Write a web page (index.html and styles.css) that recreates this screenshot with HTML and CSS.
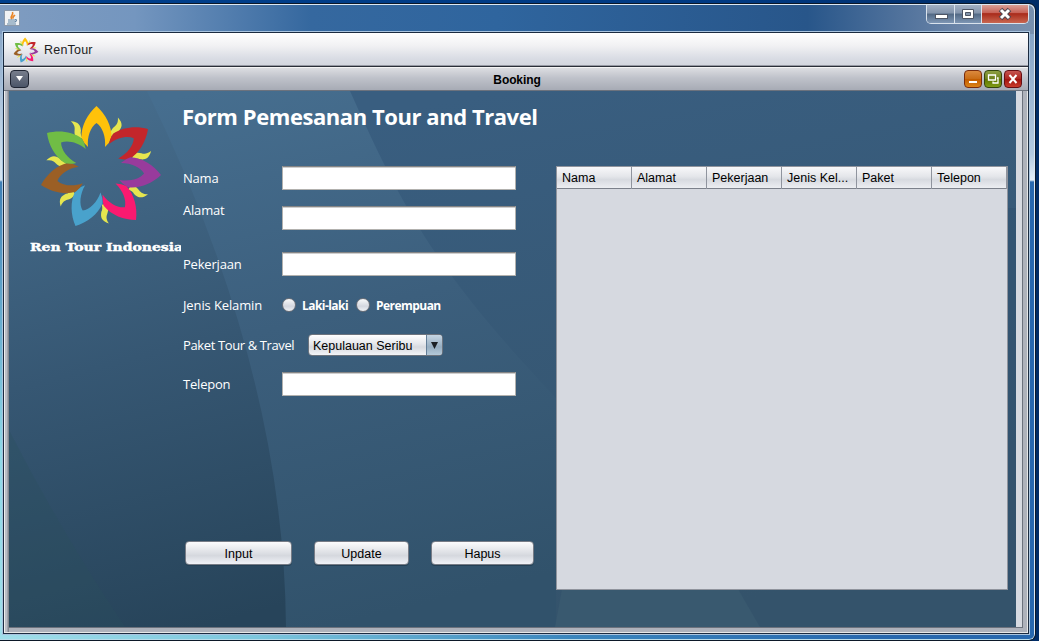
FILE: index.html
```html
<!DOCTYPE html>
<html lang="id">
<head>
<meta charset="utf-8">
<title>RenTour</title>
<link rel="stylesheet" href="styles.css">
</head>
<body>
<svg class="defs" width="0" height="0">
  <defs>
    <path id="petal" d="M0 0C-9 8-15.500 20-15 32Q-13 37-8.500 41C-9.500 31-6 21 0 17C6 21 9.500 31 8.500 41Q13 37 15 32C15.500 20 9 8 0 0Z"/>
    <path id="leaf" d="M-3 0C-5-10 3-9-1-19C6-15 6-11 4-6Q2-4 2 1Z"/>
    <g id="flower">
      <g fill="#e6e64f">
        <use href="#leaf" transform="translate(113 136) rotate(18)"/>
        <use href="#leaf" transform="translate(133 157) rotate(75)"/>
        <use href="#leaf" transform="translate(130 188) rotate(112)"/>
        <use href="#leaf" transform="translate(104 205) rotate(168)"/>
        <use href="#leaf" transform="translate(73 192) rotate(223)"/>
        <use href="#leaf" transform="translate(65 164) rotate(284)"/>
        <use href="#leaf" transform="translate(80 138) rotate(334)"/>
      </g>
      <use href="#petal" fill="#ffc20a" transform="translate(96.500 106)"/>
      <use href="#petal" fill="#c3262b" transform="translate(148 129) rotate(57)"/>
      <use href="#petal" fill="#983b9c" transform="translate(161 175) rotate(95)"/>
      <use href="#petal" fill="#fa1a70" transform="translate(136 220) rotate(139)"/>
      <use href="#petal" fill="#49a2cc" transform="translate(75.500 226) rotate(205)"/>
      <use href="#petal" fill="#9b5f25" transform="translate(41 185) rotate(256)"/>
      <use href="#petal" fill="#70bd45" transform="translate(47 133) rotate(304)"/>
    </g>
  </defs>
</svg>
<div class="window">
  <header class="titlebar">
    <svg class="java" width="16" height="16" viewBox="0 0 16 16"><rect width="16" height="16" rx="1" fill="#8d9aab"/><rect x="1" y="1" width="14" height="14" fill="#f1f2f4"/><path d="M8 9C5 7 10 5 8.500 2M9.500 8.500C8 7 10 6 11 5" fill="none" stroke="#e98526" stroke-width="1.600"/><path d="M4 10h7M4 12h7M3 14h9M11 9.500q3 0 0 2.500" fill="none" stroke="#5f83a3" stroke-width="1.200"/></svg>
    <div class="caption">
      <span class="cap min"><svg width="27" height="18"><rect x="8.500" y="9.500" width="12" height="4" fill="#fff" stroke="#4d5565"/></svg></span>
      <span class="cap max"><svg width="26" height="18"><path d="M7.500 4.500h11v9h-11z" fill="#fff" stroke="#4d5565"/><path d="M10.500 7.500h5v3h-5z" fill="#8496ad" stroke="#4d5565"/></svg></span>
      <span class="cap close"><svg width="46" height="18"><path d="M18.500 4.500l9 9M27.500 4.500l-9 9" stroke="#4f4651" stroke-width="5"/><path d="M19 5l8 8M27 5l-8 8" stroke="#fff" stroke-width="3"/></svg></span>
    </div>
  </header>
  <div class="client">
    <nav class="menubar"><svg width="26" height="26" viewBox="38 104 126 124"><use href="#flower"/></svg><span>RenTour</span></nav>
    <section class="frame">
      <div class="frame-title">
        <span class="fbtn menu"><svg width="17" height="16"><path d="M5 5h7l-3.500 5z" fill="#fff"/></svg></span>
        <b>Booking</b>
        <span class="fbtns">
          <span class="fbtn orange"><svg width="16" height="16"><path d="M4 11h8" stroke="#fff" stroke-width="2"/></svg></span>
          <span class="fbtn green"><svg width="16" height="16"><path d="M3.500 4h7v5h-7zM12 7h1v5h-5v-1.500" fill="none" stroke="#fff" stroke-width="1.300"/></svg></span>
          <span class="fbtn red"><svg width="16" height="16"><path d="M4.500 4l7 8M11.500 4l-7 8" stroke="#fff" stroke-width="2"/></svg></span>
        </span>
      </div>
      <div class="frame-body">
        <main class="panel">
          <svg class="backdrop" width="1007" height="536" viewBox="9 91 1007 536" preserveAspectRatio="none">
            <defs>
              <linearGradient id="base" gradientUnits="userSpaceOnUse" x1="60" y1="91" x2="200" y2="627"><stop offset="0" stop-color="#476e8e"/><stop offset=".5" stop-color="#365773"/><stop offset="1" stop-color="#27445a"/></linearGradient>
              <linearGradient id="mid" gradientUnits="userSpaceOnUse" x1="200" y1="91" x2="330" y2="627"><stop offset="0" stop-color="#466e8f"/><stop offset=".45" stop-color="#3c5f7d"/><stop offset="1" stop-color="#31526b"/></linearGradient>
              <linearGradient id="right" gradientUnits="userSpaceOnUse" x1="500" y1="91" x2="600" y2="627"><stop offset="0" stop-color="#395e80"/><stop offset="1" stop-color="#34536b"/></linearGradient>
            </defs>
            <path d="M9 91h1007v536H9z" fill="url(#base)"/>
            <path d="M9 430Q60 530 125 627H9z" fill="#2c505c" opacity=".3"/>
            <path d="M147 91Q284 370 286 627H1016V91z" fill="url(#mid)"/>
            <path d="M350 91C405 215 440 275 556 398V627H1016V91z" fill="url(#right)"/>
            <path d="M562 589L555 627H760L738 589z" fill="#39596f"/>
            <path d="M1007 208h9V590h-9z" fill="#2f4f6d" opacity=".5"/>
          </svg>
          <aside class="brand">
            <svg width="126" height="126" viewBox="38 103 126 126"><use href="#flower"/></svg>
            <svg class="wordmark" width="151" height="14"><text x="0" y="10" textLength="153" lengthAdjust="spacingAndGlyphs">Ren Tour Indonesia</text></svg>
          </aside>
          <form class="form">
            <h1>Form Pemesanan Tour and Travel</h1>
            <div class="row nama"><label>Nama</label><input type="text"></div>
            <div class="row alamat"><label>Alamat</label><input type="text"></div>
            <div class="row pekerjaan"><label>Pekerjaan</label><input type="text"></div>
            <div class="row jenis"><label>Jenis Kelamin</label><span class="radio"></span><b class="laki">Laki-laki</b><span class="radio"></span><b>Perempuan</b></div>
            <div class="row paket"><label>Paket Tour &amp; Travel</label><div class="combo"><span>Kepulauan Seribu</span><i><svg width="15" height="20"><path d="M4 7h7l-3.500 7z" fill="#1c2025"/></svg></i></div></div>
            <div class="row telepon"><label>Telepon</label><input type="text"></div>
            <div class="actions"><button type="button" class="b1">Input</button><button type="button" class="b2">Update</button><button type="button" class="b3">Hapus</button></div>
          </form>
          <div class="table"><div class="thead"><span>Nama</span><span>Alamat</span><span>Pekerjaan</span><span>Jenis Kel...</span><span>Paket</span><span>Telepon</span></div></div>
        </main>
      </div>
    </section>
  </div>
</div>
</body>
</html>
```

FILE: styles.css
```css
* { box-sizing: border-box; }
body { margin: 0; height: 641px; overflow: hidden; padding-top: 3px; background: linear-gradient(90deg, #00408d, #003a83 70%, #002c66); font: 12.5px "Liberation Sans", Arial, sans-serif; color: #000; }
svg { display: block; flex: none; }
.defs { position: absolute; }
.window { width: 1036px; height: 638px; border: 1px solid #0c1828; border-left: 0; border-radius: 0 7px 7px 0; box-shadow: inset -1px 1px #dce8f3, inset 0 -1px #b9dceb; padding: 1px 6px 0 3px; background: linear-gradient(90deg, #a0deea 0, #7cc6dd 25%, #3b86bd 55%, #2868ae 85%) bottom / 100% 8px no-repeat, linear-gradient(90deg, #7f9cc0 0, #7496bf 13%, #35689f 30%, #2f659e 48%, #28568a 78%, #7088aa 94%, #7890ae) top / 100% 30px no-repeat, linear-gradient(#7b9bc0, #b3cae0 150px, #e4eff8 176px, #2868ae 178px) right / 7px 100% no-repeat, linear-gradient(#7b9bc0, #d5e4f1 176px, #3e7fb6 178px, #8fd9e8 450px, #a0deea); }
.titlebar { height: 27px; display: flex; justify-content: space-between; }
.java { margin: 5px 0 0 1px; }
.caption { display: flex; height: 19px; border: 1px solid #d9e2ec; border-top: 0; border-radius: 0 0 5px 5px; overflow: hidden; }
.cap { background: linear-gradient(#a2b0c3, #8394ac 45%, #526985 50%, #7e96b4); border-right: 1px solid #d9e2ec; }
.cap.close { border: 0; background: linear-gradient(#d99f95, #c86459 42%, #a92b1b 48%, #c96751); }
.client { height: 602px; width: 1026px; border: 1px solid #1b2b40; border-width: 1px 1px 2px; box-shadow: 0 0 0 1px #a9c4df; display: flex; flex-direction: column; }
.menubar { height: 33px; flex: none; display: flex; align-items: center; gap: 5px; padding: 1px 0 0 9px; color: #222; letter-spacing: .2px; background: linear-gradient(#fff, #f1f1f3 40%, #d9dce4 80%, #d4d7df); border-bottom: 1px solid #9699a3; }
.menubar span { padding-top: 1px; }
.frame { flex: 1; border: 1px solid #2b2f39; border-width: 1px 0 0; background: linear-gradient(90deg, #eee 0 1px, #babec6 1px 3px, #858992 4px 5px, transparent 5px), #aeb2bb; padding: 0 4px 5px 5px; box-shadow: inset -1px -1px #e7e7e7; display: flex; flex-direction: column; }
.frame-title { height: 24px; margin: 0 -4px 0 -5px; padding: 0 6px 0 6px; border-top: 1px solid #f5f5f5; border-bottom: 1px solid #6c727d; background: linear-gradient(#dcdde1, #bfc2ca 45%, #a7abb5); display: flex; justify-content: space-between; align-items: center; }
.frame-title b { font-size: 12px; letter-spacing: -.1px; margin: 1px 0 0 41px; }
.fbtns { display: flex; gap: 2px; }
.fbtn { width: 18px; height: 18px; border: 1px solid; border-radius: 4px; }
.menu { width: 19px; border-color: #1e2432; background: linear-gradient(#777d8c, #4b5568); }
.orange { border-color: #7a2d0d; background: linear-gradient(#dc8a3e, #c86c15 50%, #c25c00 52%, #dc8418); }
.green { border-color: #34460e; background: linear-gradient(#8e9f43, #6c801c 50%, #5d7400 52%, #809b17); }
.red { border-color: #660e13; background: linear-gradient(#c65450, #ac231d 50%, #a0140f 52%, #c93c2c); }
.frame-body { flex: none; height: 537px; margin-right: 1px; border-right: 1px solid #6c727d; border-bottom: 1px solid #6c727d; background: #d6d9e0; }
.panel { position: relative; width: 1007px; height: 536px; display: flex; overflow: hidden; }
.backdrop { position: absolute; inset: 0; }
.brand { position: relative; width: 173px; padding: 12px 0 0 29px; }
.wordmark { margin: 12px 0 0 -8px; font: 900 10.5px "DejaVu Serif", serif; fill: #fff; stroke: #fff; stroke-width: .4px; }
.form { position: relative; width: 374px; padding-left: 1px; color: #fff; font-family: "Open Sans", "Noto Sans", sans-serif; }
h1 { margin: 9px 0 33px -1px; font-size: 22px; line-height: 33px; font-weight: 700; letter-spacing: -.44px; white-space: nowrap; }
.row { display: flex; align-items: center; height: 24px; }
label { width: 99px; flex: none; font-size: 13px; line-height: 20px; font-weight: 500; letter-spacing: -.2px; white-space: nowrap; }
input { width: 234px; height: 24px; border: 1px solid #b2b1ae; border-top: 1px solid #858585; box-shadow: inset 0 1px #cecece; padding: 0; background: #fff; }
.alamat { margin-top: 16px; }
.alamat label { padding-bottom: 16px; }
.pekerjaan { margin-top: 22px; }
.jenis { margin-top: 17px; font-size: 12px; letter-spacing: -.55px; }
.jenis label { letter-spacing: -.12px; }
.paket { margin-top: 16px; }
.paket label { width: 125px; letter-spacing: -.38px; }
.telepon { margin-top: 15px; }
.radio { width: 14px; height: 14px; border: 1px solid #6c7078; border-radius: 50%; background: linear-gradient(#fafafa, #d4d7df 60%, #eff1f5); margin-right: 6px; }
.laki { margin-right: 8px; }
.combo { width: 135px; height: 22px; display: flex; justify-content: space-between; border: 1px solid #6d747e; border-radius: 4px; overflow: hidden; background: linear-gradient(#fff, #e4e6eb 45%, #d6d9df 60%, #f2f4f7); color: #000; font: 12.5px/22px "Liberation Sans", sans-serif; padding-left: 4px; }
.combo i { width: 16px; border-left: 1px solid #637e98; background: linear-gradient(#c5d5e3, #96adc1 60%, #b4c9d9); }
.actions { display: flex; margin: 145px 0 0 2px; }
button { height: 24px; border: 1px solid #777c86; border-radius: 4px; padding: 1px 0 0; background: linear-gradient(#fcfcfd, #e3e5e9 40%, #d5d8de 62%, #f0f2f7); font: 12.5px "Liberation Sans", sans-serif; color: #000; box-shadow: 0 1px #244055; }
.b1 { width: 107px; margin-right: 22px; }
.b2 { width: 95px; margin-right: 22px; }
.b3 { width: 103px; }
.table { position: relative; width: 452px; height: 424px; margin-top: 75px; border: 1px solid #90949d; background: #d6d9e0; }
.thead { display: grid; grid-template-columns: repeat(6, 75px); height: 22px; border-bottom: 1px solid #7c818b; background: linear-gradient(#f8f8fa, #e4e6ea 45%, #d7dae0 60%, #eceef2); }
.thead span { padding-left: 5px; line-height: 22px; border-right: 1px solid #8f949e; white-space: nowrap; }
```
